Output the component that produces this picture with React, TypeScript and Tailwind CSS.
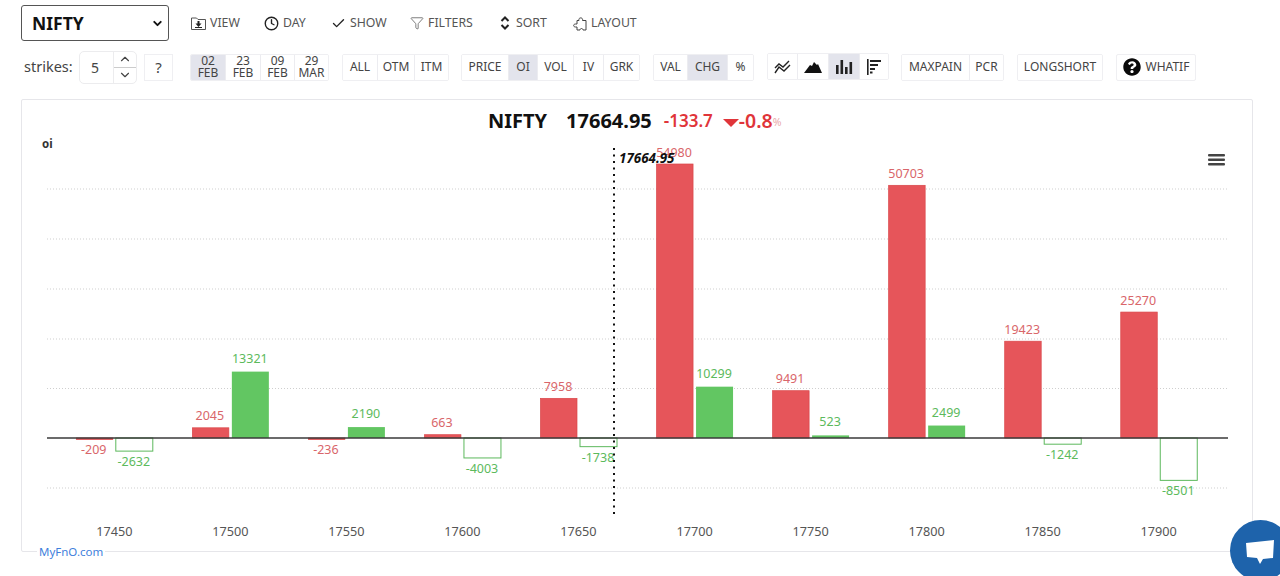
import React from "react";
import { Clock, Check, Funnel, ChevronUp, ChevronDown } from "lucide-react";
import { FaQuestionCircle } from "react-icons/fa";

const RED = "#e6555a";
const GREEN = "#62c662";
const SCALE = 274 / 54980;
const BASE = 339;
const OX = 21;
const OY = 99;

const data: [number, number, number][] = [
  [17450, -209, -2632],
  [17500, 2045, 13321],
  [17550, -236, 2190],
  [17600, 663, -4003],
  [17650, 7958, -1738],
  [17700, 54980, 10299],
  [17750, 9491, 523],
  [17800, 50703, 2499],
  [17850, 19423, -1242],
  [17900, 25270, -8501],
];

function TopItem({ icon, label, w }: { icon: React.ReactNode; label: string; w: string }) {
  return (
    <div className={`flex items-center gap-1 text-[12.3px] text-[#555] ${w}`}>
      {icon}
      <span>{label}</span>
    </div>
  );
}

function Btn({ children, w, active }: { children: React.ReactNode; w: string; active?: boolean }) {
  return (
    <div
      className={`flex h-full items-center justify-center border-r border-[#ececf0] text-[12px] leading-[12px] text-[#444] last:border-r-0 ${w} ${
        active ? "bg-[#e3e4ec]" : "bg-white"
      }`}
    >
      {children}
    </div>
  );
}

function Group({ children, cls }: { children: React.ReactNode; cls: string }) {
  return <div className={`flex h-[27px] items-center overflow-hidden rounded-[2px] border border-[#efeff2] ${cls}`}>{children}</div>;
}

function Chart() {
  const grid = [189, 239, 289, 339, 388.5, 488];
  return (
    <svg width="1230" height="451" viewBox="0 0 1230 451" className="block" fontFamily="'Noto Sans', sans-serif">
      <g transform="translate(-1,-1)">
        <text x={21} y={49} fontSize="11.5" fontWeight="700" fill="#333">oi</text>
        {grid.map((g) => (
          <line key={g} x1={26} x2={1207} y1={g - OY} y2={g - OY} stroke="#cfcfcf" strokeWidth="1" strokeDasharray="1 2" />
        ))}
        {data.map(([k, r, g], i) => {
          const c = 114.3 + 116.05 * i - OX;
          const rh = Math.abs(r) * SCALE;
          const gh = Math.abs(g) * SCALE;
          const rTop = r >= 0 ? BASE - rh : BASE;
          const gTop = g >= 0 ? BASE - gh : BASE;
          const rLabel = r >= 0 ? BASE - rh - 7.5 : BASE + rh + 15;
          const gLabel = g >= 0 ? BASE - gh - 9 : BASE + gh + 15;
          return (
            <g key={k}>
              <rect x={c - 38} y={rTop} width={36.5} height={Math.max(rh, 1.5)} fill={RED} stroke="#d94649" strokeWidth="0.7" />
              {g >= 0 ? (
                <rect x={c + 1.5} y={gTop} width={37} height={gh} fill={GREEN} />
              ) : (
                <rect x={c + 1.5} y={gTop} width={37} height={gh} fill="#fff" stroke="#5cb85c" strokeWidth="1" />
              )}
              <text x={c - 20.5} y={rLabel} textAnchor="middle" fontSize="12.5" fill="#d9666a">{r}</text>
              <text x={c + 19.5} y={gLabel} textAnchor="middle" fontSize="12.5" fill="#5cba5c">{g}</text>
              <text x={c} y={437} textAnchor="middle" fontSize="12.7" fill="#555">{k}</text>
            </g>
          );
        })}
        <line x1={26} x2={1207} y1={BASE} y2={BASE} stroke="#3a3a3a" strokeWidth="1.7" />
        <line x1={593} x2={593} y1={49} y2={417} stroke="#111" strokeWidth="2" strokeDasharray="2 4.5" />
        <text x={598} y={64} fontSize="13.4" fontWeight="700" fontStyle="italic" fill="#111">17664.95</text>
        <g fill="#444">
          <rect x={1187} y={55} width={17} height={2.4} rx={1} />
          <rect x={1187} y={59.5} width={17} height={2.4} rx={1} />
          <rect x={1187} y={64} width={17} height={2.4} rx={1} />
        </g>
      </g>
    </svg>
  );
}

export default function App() {
  return (
    <div className="relative h-[576px] w-[1280px] overflow-hidden bg-white font-['Noto_Sans',sans-serif]">
      <div className="flex h-[51px] items-start pl-[21px] pt-[5px]">
        <div className="flex h-[36px] w-[148px] items-center justify-between rounded-[3px] border border-[#555] bg-white pl-[10px] pr-[4px] text-[17.5px] font-bold text-[#111]">
          <span>NIFTY</span>
          <ChevronDown size={13} strokeWidth={3.5} />
        </div>
        <div className="flex h-[36px] items-center pl-[22px]">
          <TopItem
            w="w-[73px]"
            label="VIEW"
            icon={
              <svg width="15" height="13" viewBox="0 0 15 13" fill="none" stroke="#555" strokeWidth="1">
                <path d="M0.5 1 H5.5 L7 2.5 H14.5 V12.5 H0.5 Z" />
                <path d="M6.5 4 H8.5 V6.5 H10.5 L7.5 10 L4.5 6.5 H6.5 Z" fill="#222" stroke="none" />
                <path d="M4 10.5 H11" stroke="#222" />
              </svg>
            }
          />
          <TopItem w="w-[67px]" label="DAY" icon={<Clock size={15} strokeWidth={2.2} className="text-[#222]" />} />
          <TopItem w="w-[79px]" label="SHOW" icon={<Check size={15} strokeWidth={2.2} className="text-[#222]" />} />
          <TopItem w="w-[90px]" label="FILTERS" icon={<Funnel size={14} strokeWidth={1.3} />} />
          <TopItem
            w="w-[73px]"
            label="SORT"
            icon={
              <svg width="10" height="14" viewBox="0 0 10 14" fill="none" stroke="#222" strokeWidth="2" className="mr-[2px]">
                <path d="M1.5 5 L5 1.5 L8.5 5" />
                <path d="M1.5 9 L5 12.5 L8.5 9" />
              </svg>
            }
          />
          <TopItem
            w="w-[70px]"
            label="LAYOUT"
            icon={
              <svg width="14" height="15" viewBox="0 0 14 15" fill="none" stroke="#444" strokeWidth="1">
                <path d="M4 14 V11 H2.5 C0 11 0 8 2.5 8 H4 V4.5 H6 C5 1 10.5 1 9.5 4.5 H13 V14 H10 C10 12 7 12 7 14 Z" />
              </svg>
            }
          />
        </div>
      </div>

      <div className="flex h-[32px] items-center pl-[24px]">
        <span className="w-[55px] text-[14.5px] text-[#444]">strikes:</span>
        <div className="flex h-[33px] w-[58px] overflow-hidden rounded-[5px] border border-[#ececee]">
          <div className="flex w-[33px] items-center justify-center pr-[3px] text-[14px] text-[#444]">5</div>
          <div className="flex flex-1 flex-col border-l border-[#ececee]">
            <div className="flex flex-1 items-center justify-center border-b border-[#ccc]"><ChevronUp size={14} className="text-[#444]" /></div>
            <div className="flex flex-1 items-center justify-center"><ChevronDown size={14} className="text-[#444]" /></div>
          </div>
        </div>
        <div className="ml-[7px] flex h-[27px] w-[29px] items-center justify-center border border-[#efeff2] text-[15px] text-[#444]">?</div>
        <Group cls="ml-[17px]">
          <Btn w="w-[35px]" active><span className="text-center">02<br />FEB</span></Btn>
          <Btn w="w-[35px]"><span className="text-center">23<br />FEB</span></Btn>
          <Btn w="w-[34px]"><span className="text-center">09<br />FEB</span></Btn>
          <Btn w="w-[33px]"><span className="text-center">29<br />MAR</span></Btn>
        </Group>
        <Group cls="ml-[13px]">
          <Btn w="w-[35px]">ALL</Btn>
          <Btn w="w-[37px]">OTM</Btn>
          <Btn w="w-[33px]">ITM</Btn>
        </Group>
        <Group cls="ml-[12px]">
          <Btn w="w-[47px]">PRICE</Btn>
          <Btn w="w-[29px]" active>OI</Btn>
          <Btn w="w-[36px]">VOL</Btn>
          <Btn w="w-[30px]">IV</Btn>
          <Btn w="w-[35px]">GRK</Btn>
        </Group>
        <Group cls="ml-[13px]">
          <Btn w="w-[34px]">VAL</Btn>
          <Btn w="w-[40px]" active>CHG</Btn>
          <Btn w="w-[25px]">%</Btn>
        </Group>
        <Group cls="ml-[13px] mb-[1px]">
          <Btn w="w-[30px]">
            <svg width="17" height="14" viewBox="0 0 17 14" fill="none" stroke="#222" strokeWidth="1.4"><path d="M1 8 L5 4 L9 7 L15 1" /><path d="M1 13 L5 7 L10 11 L16 5" /></svg>
          </Btn>
          <Btn w="w-[31px]">
            <svg width="18" height="12" viewBox="0 0 18 12" fill="#111"><path d="M0 12 L6 4 L8 5 L10 1 L13 4 L14 3 L18 12 Z" /></svg>
          </Btn>
          <Btn w="w-[31px]" active>
            <svg width="17" height="15" viewBox="0 0 17 15" fill="#222"><rect x="0" y="6" width="2.6" height="9" /><rect x="4.5" y="1" width="2.6" height="14" /><rect x="9" y="8" width="2.6" height="7" /><rect x="13.5" y="3" width="2.6" height="12" /></svg>
          </Btn>
          <Btn w="w-[28px]">
            <svg width="14" height="16" viewBox="0 0 14 16" fill="#222"><rect x="0" y="0" width="1.6" height="16" /><rect x="3" y="1" width="11" height="2" /><rect x="3" y="5" width="8" height="2" /><rect x="3" y="9" width="5" height="2" /><rect x="3" y="12.5" width="2.5" height="2" /></svg>
          </Btn>
        </Group>
        <Group cls="ml-[12px]">
          <Btn w="w-[68px]">MAXPAIN</Btn>
          <Btn w="w-[33px]">PCR</Btn>
        </Group>
        <Group cls="ml-[13px]">
          <Btn w="w-[84px]">LONGSHORT</Btn>
        </Group>
        <Group cls="ml-[13px]">
          <div className="flex h-full w-[78px] items-center justify-center gap-[5px] text-[12px] text-[#444]">
            <FaQuestionCircle size={18} className="text-[#0a0a0a]" />
            <span>WHATIF</span>
          </div>
        </Group>
      </div>

      <div className="relative ml-[21px] mt-[16px] h-[453px] w-[1232px] rounded-[2px] border border-[#e6e6ea] bg-white">
        <div className="absolute left-0 right-0 top-[6px] flex items-center pl-[466px] font-bold">
          <span className="text-[20px] text-[#111]">NIFTY</span>
          <span className="ml-[19px] text-[20px] text-[#111]">17664.95</span>
          <span className="ml-[12px] text-[17px] font-semibold text-[#e0353a]">-133.7</span>
          <svg width="16" height="8" viewBox="0 0 16 8" className="ml-[10px] mt-[4px]"><path d="M0 0 H16 L8 8 Z" fill="#e0353a" /></svg>
          <span className="text-[19.5px] font-semibold text-[#e0353a]">-0.8</span>
          <span className="mt-[3px] text-[10.5px] font-normal text-[#e9a9a9]">%</span>
        </div>
        <Chart />
        <span className="absolute left-[15px] top-[443px] bg-white px-[2px] text-[11.5px] text-[#3f7fdc]">MyFnO.com</span>
      </div>

      <div className="absolute left-[1230px] top-[520px] flex h-[61px] w-[61px] items-center justify-center rounded-full bg-[#1e63ab]">
        <svg width="30" height="26" viewBox="0 0 30 26" className="mr-[1px] mt-[2px]"><path d="M1 4 L29 1 L28 19 L18 20 L15 25 L12 19 L2 18 Z" fill="#fff" /></svg>
      </div>
    </div>
  );
}
